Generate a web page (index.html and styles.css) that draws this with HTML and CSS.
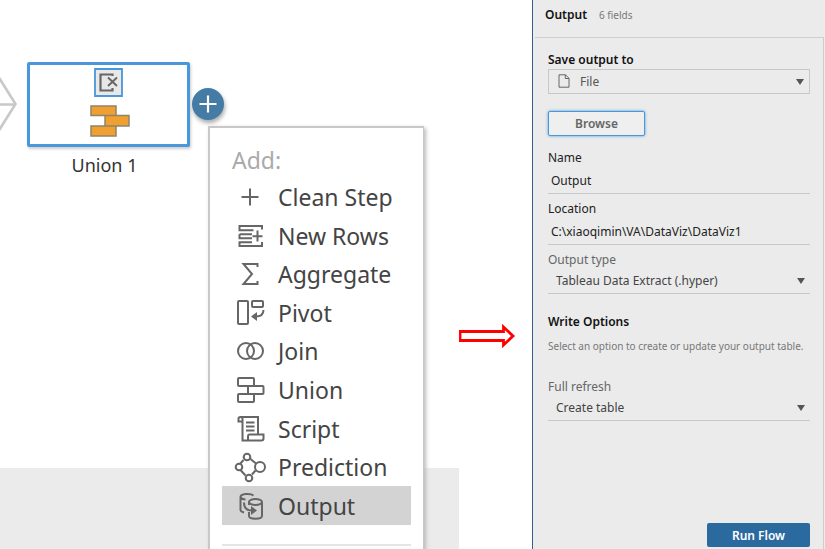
FILE: index.html
```html
<!DOCTYPE html>
<html lang="en">
<head>
<meta charset="utf-8">
<title>Flow output</title>
<link rel="stylesheet" href="styles.css">
</head>
<body>
<main class="app">
  <section class="flow" aria-label="Flow">
    <div class="canvas">
      <svg class="edges" width="20" height="70" viewBox="0 0 20 70" fill="none" stroke="#c8c8c8" stroke-width="2.6"><path d="M-2 7 15.500 35-2 63M-2 35.500H16"/></svg>
      <div class="node">
        <div class="node-box">
          <svg class="badge" width="29" height="29" viewBox="0 0 29 29" fill="none"><path d="M1 1h27v27H1z" fill="#e8e8e8" stroke="#4a97d9" stroke-width="1.8"/><path d="M18.500 8V6.500H6.500v16h12V20" stroke="#666" stroke-width="2.200"/><path d="m14 9.500 9 8.500m0-8.500-9 8.500" stroke="#666" stroke-width="1.900"/></svg>
          <svg class="bricks" width="40" height="32" viewBox="0 0 40 32" fill="#f0a030" stroke="#8f8468" stroke-width="1.5"><path d="M1 1h25v9.500H1zM1 21h25v10H1zM15 10.500h24v10.500H15z"/></svg>
        </div>
        <span class="node-name">Union 1</span>
      </div>
      <button class="add" aria-label="Add step"><svg width="18" height="18" viewBox="0 0 18 18" fill="none" stroke="#fff" stroke-width="2.200"><path d="M9 .5v17M.5 9h17"/></svg></button>
      <div class="menu">
        <h2 class="menu-title">Add:</h2>
        <div class="items">
        <button class="item"><svg class="icon" viewBox="0 0 32 32"><path d="M16 7.500v17M7.500 16h17"/></svg>Clean Step</button>
        <button class="item"><svg class="icon" viewBox="0 0 32 32"><path d="M28 9.500V6H5.500v4.300H19.500M5.500 10.300M18 14.300H5.500M18 18.300H5.500v-4M18 22.300H5.500v-1M5.500 22.300v3.700H28V22M23.500 10.500v11M18.500 16.300h10"/></svg>New Rows</button>
        <button class="item"><svg class="icon" viewBox="0 0 32 32"><path d="M23.500 9V6H9.500l8.500 10-8.500 10h14v-3"/></svg>Aggregate</button>
        <button class="item"><svg class="icon" viewBox="0 0 32 32"><rect x="4" y="4" width="10" height="23" rx="1"/><rect x="18" y="4" width="11" height="6" rx="1"/><path d="M29.500 13c0 5-4 6.500-8 6.500"/><path d="m23 15-6 4.500 6 4.500z" fill="#666" stroke="none"/></svg>Pivot</button>
        <button class="item"><svg class="icon" viewBox="0 0 32 32"><circle cx="12" cy="16" r="8"/><circle cx="21" cy="16" r="8"/></svg>Join</button>
        <button class="item"><svg class="icon" viewBox="0 0 32 32"><rect x="4" y="4" width="16" height="8" rx="1"/><rect x="14" y="12" width="15.500" height="8" rx="1"/><rect x="4" y="20" width="16" height="8" rx="1"/></svg>Union</button>
        <button class="item"><svg class="icon" viewBox="0 0 32 32"><path d="M8.500 8.500H4.500v-3q0-1.500 2-1.500H24v17M6.500 4q2 0 2 2v21.500H27.500q2 0 2-2V21.500H15.500q-1.500 0-1.500 2v4M12 9.500h8.500M12 13.500h8.500M12 17.500h8.500"/></svg>Script</button>
        <button class="item"><svg class="icon" viewBox="0 0 32 32"><path d="m9.500 9-3.500 4M16.500 8l5.500 4.500M6.500 19l5 5.500M21.500 19.500l-3.500 4"/><circle cx="13" cy="6" r="3.300"/><circle cx="5" cy="16" r="3.300"/><circle cx="26" cy="16" r="5"/><circle cx="15" cy="27" r="3.300"/></svg>Prediction</button>
        <button class="item item-active"><svg class="icon" viewBox="0 0 32 32"><path d="M19.500 5.500c-3-2.500-13-2-13 1.500v13c0 1 1.500 2 3.500 2.500M6.500 7.500C8 9 10 9.500 11.500 9.500M15 15v-3.500M15 22v4c0 3.500 13 3.500 13 0V12"/><ellipse cx="21.500" cy="12" rx="6.500" ry="3"/><path d="M10 12.500c0 5 2 8 8 8"/><path d="m17 16 6 4.500-6 4.500z" fill="#666" stroke="none"/></svg>Output</button>
        </div>
        <hr class="menu-rule">
      </div>
    </div>
    <div class="preview"></div>
  </section>
  <div class="pointer">
    <svg width="57" height="26" viewBox="0 0 57 26"><path d="M1 8.500h43.500V4L54 13l-9.500 9v-4.500H1z" fill="#fff" stroke="#f00" stroke-width="2.800"/></svg>
  </div>
  <aside class="panel">
    <header class="panel-head"><h1 class="heading">Output</h1><span class="hint">6 fields</span></header>
    <form class="form">
      <label class="heading" for="dest">Save output to</label>
      <div class="pick pick-boxed">
        <svg class="file" width="12" height="14" viewBox="0 0 12 14" fill="none" stroke="#666"><path d="M1 .8h6.500L11 4.300v8.900H1zM7.300.8v3.700H11"/></svg>
        <select id="dest"><option>File</option></select>
        <svg class="caret" width="8" height="6" viewBox="0 0 8 6"><path d="M0 0h8L4 6z"/></svg>
      </div>
      <button type="button" class="browse">Browse</button>
      <div class="field"><label for="name">Name</label><input id="name" type="text" value="Output"></div>
      <div class="field"><label for="location">Location</label><input id="location" type="text" value="C:\xiaoqimin\VA\DataViz\DataViz1"></div>
      <div class="field field-muted"><label for="type">Output type</label>
        <div class="pick"><select id="type"><option>Tableau Data Extract (.hyper)</option></select><svg class="caret" width="8" height="6" viewBox="0 0 8 6"><path d="M0 0h8L4 6z"/></svg></div>
      </div>
      <h2 class="heading write">Write Options</h2>
      <p class="hint note">Select an option to create or update your output table.</p>
      <div class="field field-muted"><label for="refresh">Full refresh</label>
        <div class="pick"><select id="refresh"><option>Create table</option></select><svg class="caret" width="8" height="6" viewBox="0 0 8 6"><path d="M0 0h8L4 6z"/></svg></div>
      </div>
      <button type="button" class="run">Run Flow</button>
    </form>
  </aside>
</main>
</body>
</html>
```
FILE: styles.css
```css
* { box-sizing: border-box; }
body { margin: 0; background: #fff; font-family: "Noto Sans", sans-serif; font-size: 12px; color: #222; }
button, input, select { font: inherit; color: inherit; margin: 0; }
h1, h2, p { margin: 0; }
.app { display: grid; grid-template-columns: minmax(0, 1fr) 73px 293px; height: 100vh; overflow: hidden; }
.flow { display: flex; flex-direction: column; min-height: 0; }
.canvas { position: relative; flex: 1; min-height: 0; }
.preview { height: 81px; background: #ebebeb; }

.edges { position: absolute; left: 0; top: 69px; }
.node { position: absolute; left: 27px; top: 62px; width: 163px; text-align: center; }
.node-box { display: flex; flex-direction: column; align-items: center; gap: 8px; height: 85px; padding-top: 3px; border: 3px solid #4a97d9; border-radius: 2px; background: #fff; box-shadow: 1px 2px 3px #ccc; }
.bricks { margin-left: 2px; }
.node-name { display: block; margin-right: 8px; padding-top: 5px; font-size: 18px; line-height: 26px; color: #333; }
.add { position: absolute; left: 192px; top: 88px; width: 32px; height: 32px; padding: 0; display: grid; place-items: center; border: 0; border-radius: 50%; background: #457ca6; box-shadow: 1px 3px 4px #aaa; }

.menu { position: absolute; z-index: 2; left: 208px; top: 126px; width: 216px; height: 440px; padding: 14px 12px; border: 2px solid #c8c8c8; border-width: 2px 1px 2px 2px; background: #fff; box-shadow: 2px 2px 4px #bbb; }
.menu-title { padding-left: 10px; font-size: 23px; font-weight: 400; line-height: 36px; color: #aaa; }
.items { display: grid; grid-auto-rows: 1fr; height: 347px; }
.item { display: flex; align-items: center; gap: 12px; width: 100%; padding: 0 0 0 12px; border: 0; background: none; font-size: 23px; line-height: 36px; color: #444; }
.item-active { background: #d3d3d3; }
.icon { width: 32px; height: 32px; fill: none; stroke: #666; stroke-width: 2; }
.menu-rule { margin: 19px 0 0; border: 0; border-top: 2px solid #e4e4e4; }

.pointer { padding-top: 323px; }

.panel { display: flex; flex-direction: column; padding: 0 1px 0 2px; border-left: 1px solid #365f91; background: #ebebeb; }
.panel-head { display: flex; align-items: center; gap: 12px; height: 38px; padding: 0 10px 7px; border-bottom: 1px solid #d0d0d0; }
.heading { font-size: 12px; font-weight: 600; line-height: 18px; color: #111; }
.hint { font-size: 10px; line-height: 18px; color: #777; }
.form { display: flex; flex: 1; flex-direction: column; padding: 13px 13px 2px; border-right: 1px solid #ccc; }
.pick { position: relative; display: flex; align-items: center; height: 25px; border-bottom: 1px solid #c8c8c8; color: #444; }
.pick select { width: 100%; height: 100%; padding: 0 20px 0 8px; border: 0; background: none; appearance: none; }
.pick-boxed { border: 1px solid #c8c8c8; color: #555; }
.pick-boxed select { padding-left: 31px; }
.file { position: absolute; left: 9px; top: 4px; }
.caret { position: absolute; right: 5px; top: 9px; fill: #555; pointer-events: none; }
.browse { width: 97px; height: 25px; margin: 17px 0 13px; padding: 0; border: 1px solid #4a97d9; border-radius: 2px; background: #efefef; box-shadow: 0 0 3px #4a97d9; font-weight: 600; color: #666; }
.field { display: flex; flex-direction: column; margin-bottom: 6px; line-height: 18px; }
.field input { height: 27px; padding: 0 3px; border: 0; border-bottom: 1px solid #c8c8c8; background: none; outline: 0; }
.field-muted label { color: #666; }
.write { margin-top: 13px; }
.note { margin: 6px 0 23px; white-space: nowrap; }
.run { align-self: flex-end; width: 103px; height: 24px; margin-top: auto; padding: 0; border: 0; border-radius: 2px; background: #2b6a9f; color: #fff; font-weight: 600; }
```
